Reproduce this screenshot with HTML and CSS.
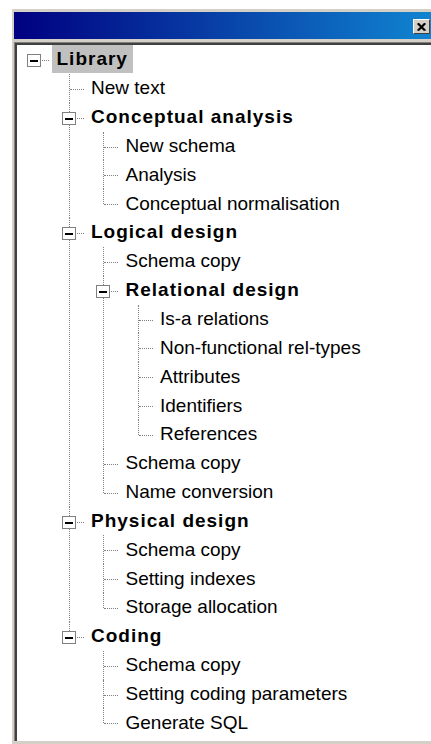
FILE: index.html
```html
<!DOCTYPE html>
<html lang="en">
<head>
    <meta charset="UTF-8">
    <meta name="viewport" content="width=device-width, initial-scale=1.0">
    <title>Library</title>
    <link rel="stylesheet" href="styles.css">
</head>
<body>
    <div class="window">
        <div class="titlebar">
            <span class="close-btn">
                <svg width="11" height="10" viewBox="0 0 11 10">
                    <path d="M1.5 1.5 L8.5 8.5 M2.5 1.5 L9.5 8.5 M8.5 1.5 L1.5 8.5 M9.5 1.5 L2.5 8.5" stroke="#000" stroke-width="1.5" fill="none"/>
                </svg>
            </span>
        </div>
        <div class="client">
            <ul class="tree">
                <li>
                    <div class="row"><span class="joint"><span class="box"></span></span><span class="label bold selected">Library</span></div>
                    <ul>
                        <li><div class="row"><span class="joint"></span><span class="label">New text</span></div></li>
                        <li>
                            <div class="row"><span class="joint"><span class="box"></span></span><span class="label bold">Conceptual analysis</span></div>
                            <ul>
                                <li><div class="row"><span class="joint"></span><span class="label">New schema</span></div></li>
                                <li><div class="row"><span class="joint"></span><span class="label">Analysis</span></div></li>
                                <li><div class="row"><span class="joint"></span><span class="label">Conceptual normalisation</span></div></li>
                            </ul>
                        </li>
                        <li>
                            <div class="row"><span class="joint"><span class="box"></span></span><span class="label bold">Logical design</span></div>
                            <ul>
                                <li><div class="row"><span class="joint"></span><span class="label">Schema copy</span></div></li>
                                <li>
                                    <div class="row"><span class="joint"><span class="box"></span></span><span class="label bold">Relational design</span></div>
                                    <ul>
                                        <li><div class="row"><span class="joint"></span><span class="label">Is-a relations</span></div></li>
                                        <li><div class="row"><span class="joint"></span><span class="label">Non-functional rel-types</span></div></li>
                                        <li><div class="row"><span class="joint"></span><span class="label">Attributes</span></div></li>
                                        <li><div class="row"><span class="joint"></span><span class="label">Identifiers</span></div></li>
                                        <li><div class="row"><span class="joint"></span><span class="label">References</span></div></li>
                                    </ul>
                                </li>
                                <li><div class="row"><span class="joint"></span><span class="label">Schema copy</span></div></li>
                                <li><div class="row"><span class="joint"></span><span class="label">Name conversion</span></div></li>
                            </ul>
                        </li>
                        <li>
                            <div class="row"><span class="joint"><span class="box"></span></span><span class="label bold">Physical design</span></div>
                            <ul>
                                <li><div class="row"><span class="joint"></span><span class="label">Schema copy</span></div></li>
                                <li><div class="row"><span class="joint"></span><span class="label">Setting indexes</span></div></li>
                                <li><div class="row"><span class="joint"></span><span class="label">Storage allocation</span></div></li>
                            </ul>
                        </li>
                        <li>
                            <div class="row"><span class="joint"><span class="box"></span></span><span class="label bold">Coding</span></div>
                            <ul>
                                <li><div class="row"><span class="joint"></span><span class="label">Schema copy</span></div></li>
                                <li><div class="row"><span class="joint"></span><span class="label">Setting coding parameters</span></div></li>
                                <li><div class="row"><span class="joint"></span><span class="label">Generate SQL</span></div></li>
                            </ul>
                        </li>
                    </ul>
                </li>
            </ul>
        </div>
    </div>
</body>
</html>
```

FILE: styles.css
```css
html, body {
    margin: 0;
    padding: 0;
    overflow: hidden;
}
body {
    background: #fff;
    font-family: "Liberation Sans", Arial, sans-serif;
    font-size: 19px;
    color: #000;
}
.window {
    margin: 9px 0 0 12px;
    width: 417px;
    background: #d4d0c8;
    padding: 3px 0 3px 2px;
}
.titlebar {
    height: 27px;
    background: linear-gradient(to right, #000080, #1084d0);
    display: flex;
    align-items: center;
    justify-content: flex-end;
    padding-right: 1px;
}
.close-btn {
    width: 15px;
    height: 13px;
    margin-top: 2px;
    background: #d4d0c8;
    border-top: 1px solid #fff;
    border-left: 1px solid #fff;
    border-right: 1px solid #404040;
    border-bottom: 1px solid #404040;
    display: flex;
    align-items: center;
    justify-content: center;
}
.client {
    margin-top: 3px;
    background: #fff;
    border-top: 1px solid #808080;
    border-left: 1px solid #808080;
    box-shadow: inset 2px 2px 0 #404040;
    padding: 2px 0 4px 2px;
}
.tree, .tree ul {
    list-style: none;
    margin: 0;
    padding: 0;
}
.tree ul {
    margin-left: 34.5px;
}
.tree li {
    position: relative;
}
.tree ul li::before {
    content: "";
    position: absolute;
    left: 17px;
    top: 0;
    bottom: 0;
    border-left: 1px dotted #808080;
}
.tree ul li:last-child::before {
    bottom: auto;
    height: 15px;
}
.row {
    display: flex;
    align-items: center;
    height: 28.85px;
}
.joint {
    position: relative;
    flex: none;
    width: 34.5px;
    height: 100%;
}
.joint::after {
    content: "";
    position: absolute;
    left: 18px;
    top: 15px;
    width: 14px;
    border-top: 1px dotted #808080;
}
.box {
    position: absolute;
    z-index: 1;
    left: 10px;
    top: 9px;
    width: 14px;
    height: 13px;
    box-sizing: border-box;
    border: 1px solid #808080;
    background: #fff;
}
.box::after {
    content: "";
    position: absolute;
    left: 2px;
    top: 5px;
    width: 8px;
    height: 2px;
    background: #000;
}
.label {
    padding: 0 5px 0 5px;
    line-height: 28px;
    white-space: nowrap;
}
.bold {
    font-weight: bold;
    letter-spacing: 1px;
}
.selected {
    background: #c0c0c0;
}
```
